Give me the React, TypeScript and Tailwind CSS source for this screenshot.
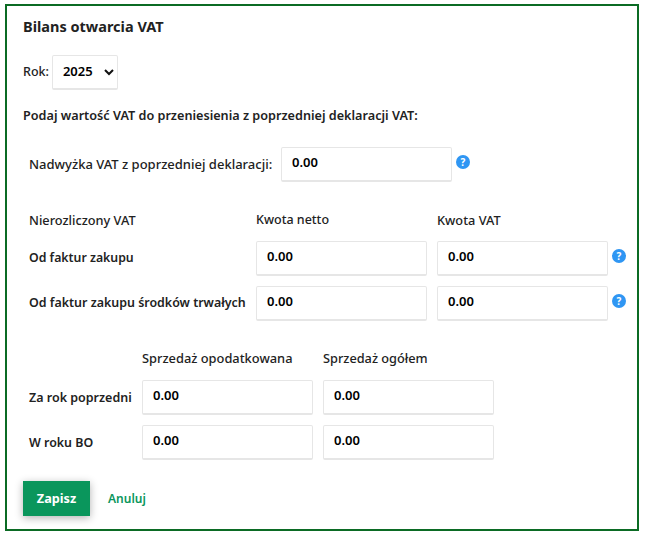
const labelFont = "font-['Noto_Sans',sans-serif]";

const Help = () => (
  <span className="flex h-[14px] w-[14px] items-center justify-center rounded-full bg-[#2f96f3] text-[10px] font-bold leading-none text-white">?</span>
);

const Amount = () => (
  <input
    readOnly
    value="0.00"
    className="h-[35px] w-[171px] rounded-[2px] border border-[#e6e6e6] border-b-2 bg-white pb-[5px] pl-[10px] text-[13px] font-semibold text-black outline-none"
  />
);

export default function App() {
  return (
    <div className={`h-[539px] w-[645px] bg-white pl-[5px] pr-[6px] pt-[4px] text-[#222] ${labelFont}`}>
      <div className="h-[527px] border-2 border-[#0b6b24] pl-[16px] pt-[10px]">
        <h1 className="text-[14.5px] font-bold leading-[20px]">Bilans otwarcia VAT</h1>

        {/* Rok */}
        <div className="mt-[19px] flex items-center gap-[3px]">
          <span className="text-[12.5px] font-medium">Rok:</span>
          <div className="flex h-[35px] w-[66px] items-center justify-between rounded-[2px] border border-[#e6e6e6] border-b-2 pl-[10px] pr-[3px]">
            <span className="text-[13px] font-semibold text-black">2025</span>
            <svg width="10" height="7" viewBox="0 0 10 7" fill="none" stroke="#111" strokeWidth="2">
              <path d="M1 1l4 4 4-4" />
            </svg>
          </div>
        </div>

        <p className="mt-[16px] text-[12.65px] font-semibold leading-[18px]">Podaj wartość VAT do przeniesienia z poprzedniej deklaracji VAT:</p>

        <div className="mt-[23px] flex items-center pl-[6px]">
          <span className="w-[252px] text-[13px] font-medium">Nadwyżka VAT z poprzedniej deklaracji:</span>
          <Amount />
          <span className="ml-[4px] -mt-[5px]"><Help /></span>
        </div>

        {/* Nierozliczony VAT */}
        <div className="mt-[29px] grid grid-cols-[227px_181px_171px_auto] items-center gap-y-[10px] pl-[6px]">
          <span className="mb-[1px] text-[12.75px] font-medium">Nierozliczony VAT</span>
          <span className="mb-[1px] text-[12.5px] font-medium">Kwota netto</span>
          <span className="mb-[1px] text-[12.75px] font-medium">Kwota VAT</span>
          <span />
          <span className="text-[12.3px] font-semibold">Od faktur zakupu</span>
          <Amount />
          <Amount />
          <span className="ml-[4px] -mt-[5px]"><Help /></span>
          <span className="text-[12.45px] font-semibold">Od faktur zakupu środków trwałych</span>
          <Amount />
          <Amount />
          <span className="ml-[4px] -mt-[5px]"><Help /></span>
        </div>

        {/* Sprzedaz */}
        <div className="mt-[28px] grid grid-cols-[113px_181px_171px] items-center gap-y-[10px] pl-[6px]">
          <span />
          <span className="mb-[2px] text-[12.85px] font-medium">Sprzedaż opodatkowana</span>
          <span className="mb-[2px] text-[12.75px] font-medium">Sprzedaż ogółem</span>
          <span className="text-[12.5px] font-semibold">Za rok poprzedni</span>
          <Amount />
          <Amount />
          <span className="text-[12.4px] font-semibold">W roku BO</span>
          <Amount />
          <Amount />
        </div>

        <div className="mt-[21px] flex items-center gap-[18px]">
          <button className="h-[35px] w-[67px] bg-[#0a965c] text-[12.7px] font-bold text-white shadow-[0_2px_8px_rgba(0,0,0,0.3)]">Zapisz</button>
          <a className="text-[12px] font-semibold text-[#0a965c]">Anuluj</a>
        </div>
      </div>
    </div>
  );
}
